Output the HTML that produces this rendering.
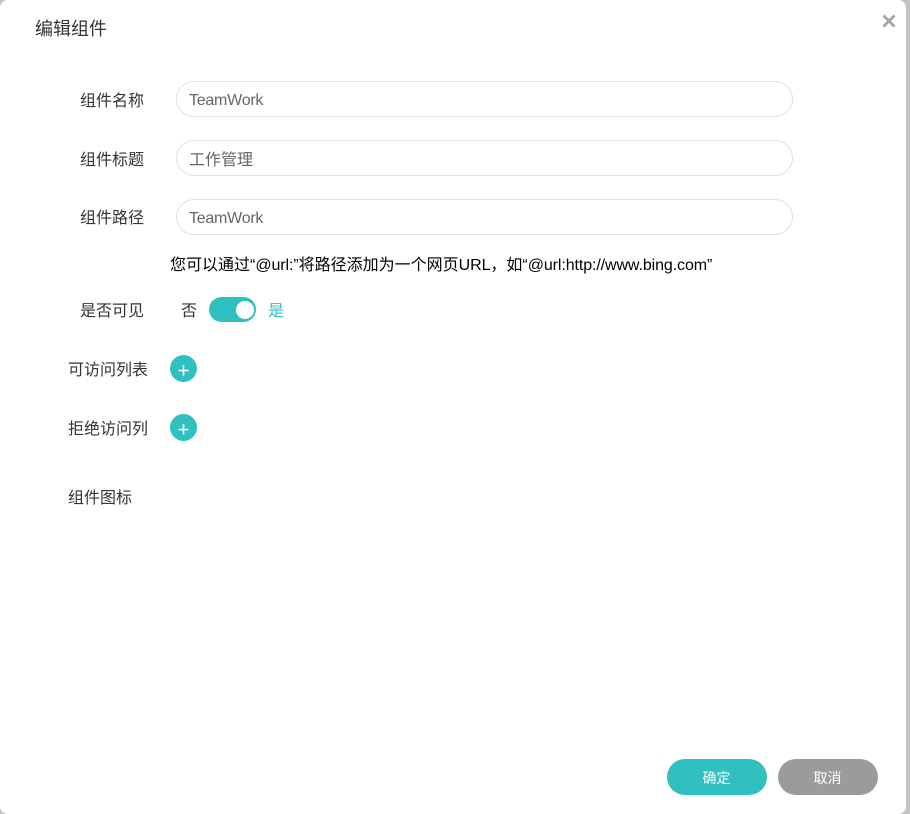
<!DOCTYPE html>
<html lang="zh-CN">
<head>
<meta charset="utf-8">
<title>编辑组件</title>
<style>
html,body{margin:0;padding:0;width:910px;height:814px;overflow:hidden;background:#c4c4c4;}
body{font-family:"Liberation Sans","Noto Sans CJK SC",sans-serif;font-size:16px;color:#333;position:relative;}
.card{position:absolute;left:0;top:0;width:906px;height:814px;background:#fff;border-radius:8px;}
.t{position:absolute;white-space:nowrap;line-height:22px;}
.input{position:absolute;left:176px;width:615px;height:34px;border:1px solid #dfdfe8;border-radius:18px;background:#fff;line-height:34px;padding:0;color:#666;}
.input span{position:absolute;left:12px;top:2px;}
.lat{letter-spacing:-.25px;}
.la{letter-spacing:-.1px;}
.plus{position:absolute;left:170px;width:27px;height:27px;border-radius:50%;background:#2fc0bf;}
.plus svg{position:absolute;left:0;top:0;}
.btn{position:absolute;top:759px;width:100px;height:36px;border-radius:18px;color:#fff;font-size:14px;text-align:center;line-height:39px;text-indent:-1px;}
</style>
</head>
<body>
<div class="card"></div>

<div class="t" style="left:35px;top:18px;font-size:18px;color:#333;">编辑组件</div>
<svg style="position:absolute;left:882px;top:14px;" width="14" height="14" viewBox="0 0 14 14"><path d="M1.5 1.5 L12.5 12.5 M12.5 1.5 L1.5 12.5" stroke="#a3a3a3" stroke-width="2.8" fill="none"/></svg>

<div class="t" style="left:80px;top:91px;">组件名称</div>
<div class="input" style="top:81px;"><span class="lat">TeamWork</span></div>

<div class="t" style="left:80px;top:150px;">组件标题</div>
<div class="input" style="top:140px;"><span style="top:3px;">工作管理</span></div>

<div class="t" style="left:80px;top:208px;">组件路径</div>
<div class="input" style="top:199px;"><span class="lat">TeamWork</span></div>

<div class="t" style="left:170px;top:255px;color:#000;">您可以通过“<span class="la">@url:</span>”将路径添加为一个网页<span class="la">URL</span>，如“<span class="la">@url:http://www.bing.com</span>”</div>

<div class="t" style="left:80px;top:301px;">是否可见</div>
<div class="t" style="left:181px;top:301px;">否</div>
<div style="position:absolute;left:209px;top:297px;width:47px;height:25px;border-radius:13px;background:#2fc0bf;"></div>
<div style="position:absolute;left:236px;top:301px;width:18px;height:18px;border-radius:50%;background:#fff;"></div>
<div class="t" style="left:268px;top:301px;color:#2fc0bf;">是</div>

<div class="t" style="left:68px;top:360px;">可访问列表</div>
<div class="plus" style="top:355px;"><svg width="27" height="27" viewBox="0 0 27 27"><path d="M13.5 10 V20.5 M8.5 15.5 H18.5" stroke="#fff" stroke-width="1.6" fill="none"/></svg></div>

<div class="t" style="left:68px;top:419px;">拒绝访问列</div>
<div class="plus" style="top:414px;"><svg width="27" height="27" viewBox="0 0 27 27"><path d="M13.5 10 V20.5 M8.5 15.5 H18.5" stroke="#fff" stroke-width="1.6" fill="none"/></svg></div>

<div class="t" style="left:68px;top:488px;">组件图标</div>

<div class="btn" style="left:667px;background:#2fc0bf;">确定</div>
<div class="btn" style="left:778px;background:#9b9b9b;">取消</div>
</body>
</html>
